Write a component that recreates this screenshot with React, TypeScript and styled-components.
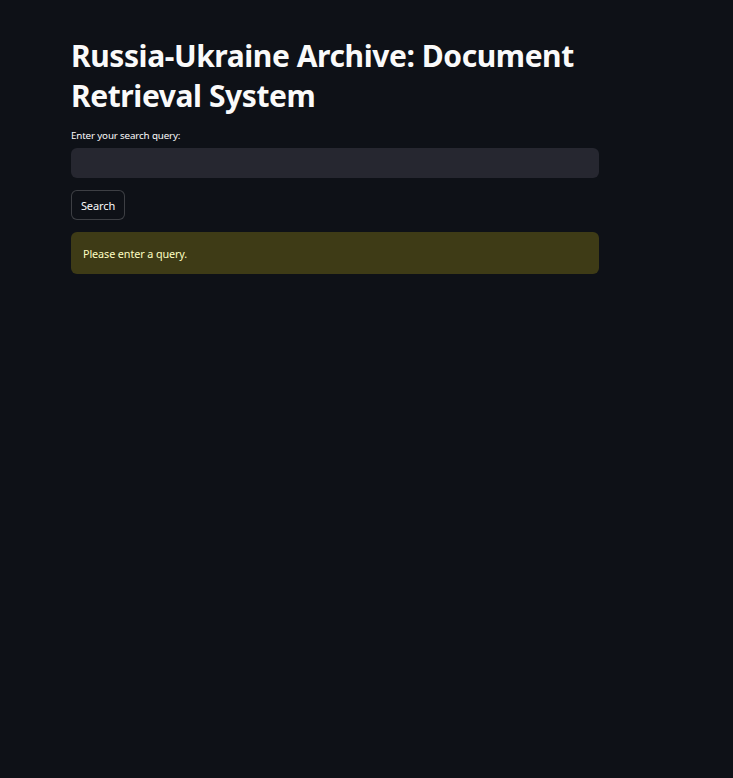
import React from "react";
import styled, { createGlobalStyle } from "styled-components";

const Global = createGlobalStyle`
  html, body { margin: 0; padding: 0; background: #0e1117; }
  body { font-family: "Noto Sans", sans-serif; color: #fafafa; }
`;

const Page = styled.main`
  min-height: 778px;
  background: #0e1117;
  padding: 36px 134px 0 71px;
  box-sizing: border-box;
  width: 733px;
`;

const Column = styled.div`
  width: 528px;
  display: flex;
  flex-direction: column;
`;

const Title = styled.h1`
  margin: 0 0 13px;
  font-family: "Noto Sans", sans-serif;
  font-weight: 700;
  font-size: 30px;
  line-height: 40px;
  color: #fafafa;
  letter-spacing: -0.42px;
`;

const Label = styled.label`
  font-size: 9.8px;
  line-height: 14px;
  color: #fafafa;
  margin-bottom: 5px;
  letter-spacing: -0.15px;
`;

const Input = styled.input`
  height: 30px;
  box-sizing: border-box;
  border: none;
  border-radius: 6px;
  background: #262730;
  color: #fafafa;
  padding: 0 10px;
  outline: none;
  font-family: inherit;
`;

const Button = styled.button`
  align-self: flex-start;
  margin-top: 12px;
  height: 30px;
  width: 54px;
  padding: 0;
  border-radius: 6px;
  border: 1px solid rgba(250, 250, 250, 0.2);
  background: #0e1117;
  color: #fafafa;
  font-family: "Noto Sans", sans-serif;
  font-size: 11px;
  letter-spacing: -0.1px;
`;

const Alert = styled.div`
  margin-top: 12px;
  height: 42px;
  box-sizing: border-box;
  padding: 0 12px;
  display: flex;
  align-items: center;
  border-radius: 6px;
  background: #3e3b16;
  color: #ffffc2;
  font-size: 10.8px;
  letter-spacing: -0.1px;
`;

export default function App() {
  return (
    <>
      <Global />
      <Page>
        <Column>
          <Title>Russia-Ukraine Archive: Document Retrieval System</Title>
          <Label>Enter your search query:</Label>
          <Input type="text" />
          <Button>Search</Button>
          <Alert>Please enter a query.</Alert>
        </Column>
      </Page>
    </>
  );
}
